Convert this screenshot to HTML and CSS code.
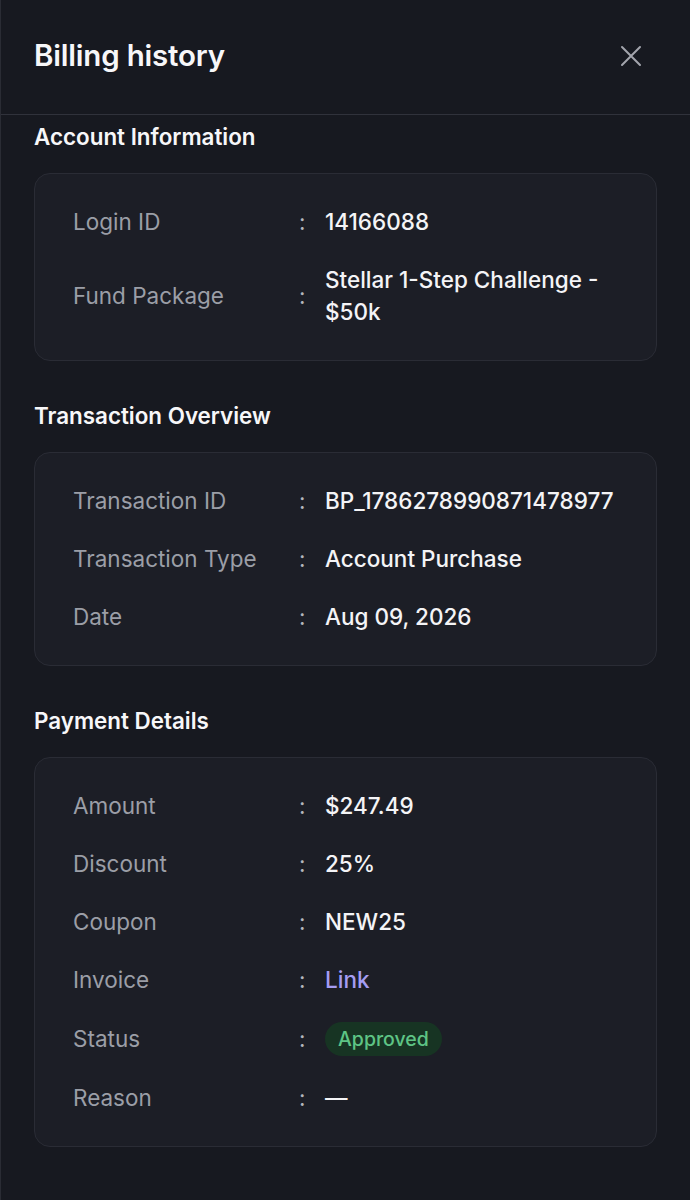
FILE: index.html
```html
<!DOCTYPE html>
<html lang="en">
<head>
<meta charset="utf-8">
<title>Billing history</title>
<link rel="stylesheet" href="styles.css">
</head>
<body>
<div class="drawer">
  <header class="drawer-header">
    <h1 class="drawer-title">Billing history</h1>
    <button class="close-btn" aria-label="Close">
      <svg width="22" height="22" viewBox="0 0 22 22" fill="none" stroke="currentColor" stroke-width="2" stroke-linecap="round"><path d="M2 2L20 20M20 2L2 20"/></svg>
    </button>
  </header>
  <main class="drawer-body">
    <section class="section">
      <h2 class="section-title">Account Information</h2>
      <div class="card">
        <div class="row"><span class="label">Login ID</span><span class="colon">:</span><span class="value">14166088</span></div>
        <div class="row"><span class="label">Fund Package</span><span class="colon">:</span><span class="value">Stellar 1-Step Challenge - $50k</span></div>
      </div>
    </section>
    <section class="section">
      <h2 class="section-title">Transaction Overview</h2>
      <div class="card">
        <div class="row"><span class="label">Transaction ID</span><span class="colon">:</span><span class="value">BP_1786278990871478977</span></div>
        <div class="row"><span class="label">Transaction Type</span><span class="colon">:</span><span class="value">Account Purchase</span></div>
        <div class="row"><span class="label">Date</span><span class="colon">:</span><span class="value">Aug 09, 2026</span></div>
      </div>
    </section>
    <section class="section">
      <h2 class="section-title">Payment Details</h2>
      <div class="card">
        <div class="row"><span class="label">Amount</span><span class="colon">:</span><span class="value">$247.49</span></div>
        <div class="row"><span class="label">Discount</span><span class="colon">:</span><span class="value">25%</span></div>
        <div class="row"><span class="label">Coupon</span><span class="colon">:</span><span class="value">NEW25</span></div>
        <div class="row"><span class="label">Invoice</span><span class="colon">:</span><span class="value"><a class="link" href="#">Link</a></span></div>
        <div class="row row-badge"><span class="label">Status</span><span class="colon">:</span><span class="value"><span class="badge">Approved</span></span></div>
        <div class="row"><span class="label">Reason</span><span class="colon">:</span><span class="value">—</span></div>
      </div>
    </section>
  </main>
</div>
</body>
</html>
```

FILE: styles.css
```css
* { box-sizing: border-box; }
html, body {
  margin: 0;
  padding: 0;
  background: #171920;
}
body {
  font-family: Inter, "Noto Sans", "Liberation Sans", sans-serif;
  color: #f4f4f6;
}
.drawer {
  min-height: 1200px;
  border-left: 1px solid #2a2c34;
  background: #171920;
}
.drawer-header {
  height: 115px;
  display: flex;
  align-items: center;
  justify-content: space-between;
  padding: 0 48px 4px 33px;
  border-bottom: 1px solid #30323b;
}
.drawer-title {
  margin: 0;
  font-size: 29.5px;
  font-weight: 600;
  letter-spacing: -0.2px;
  color: #f7f7f9;
}
.close-btn {
  background: none;
  border: 0;
  padding: 0;
  color: #a3a5ad;
  display: flex;
  margin-top: 1px;
}
.drawer-body {
  padding: 8px 33px 40px 33px;
}
.section-title {
  margin: 0 0 22px 0;
  height: 28px;
  line-height: 28px;
  font-size: 22.4px;
  font-weight: 600;
  color: #f7f7f9;
}
.section + .section {
  margin-top: 41px;
}
.card {
  background: #1c1e26;
  border: 1px solid #2a2c35;
  border-radius: 16px;
  padding: 32px 38px;
  display: flex;
  flex-direction: column;
  gap: 26px;
}
.row {
  display: grid;
  grid-template-columns: 224px 28px 1fr;
  align-items: center;
  font-size: 22.5px;
  line-height: 32px;
}
.label {
  color: #9b9ea7;
  font-weight: 400;
}
.colon {
  color: #b4b6bd;
  padding-left: 2px;
}
.value {
  color: #f4f4f6;
  font-weight: 500;
}
.link {
  color: #a59df2;
  text-decoration: none;
  font-weight: 500;
}
.badge {
  display: inline-block;
  background: #173423;
  color: #5ec485;
  border-radius: 17px;
  padding: 0 13px;
  height: 34px;
  line-height: 34px;
  font-size: 19.5px;
  font-weight: 500;
}
```
